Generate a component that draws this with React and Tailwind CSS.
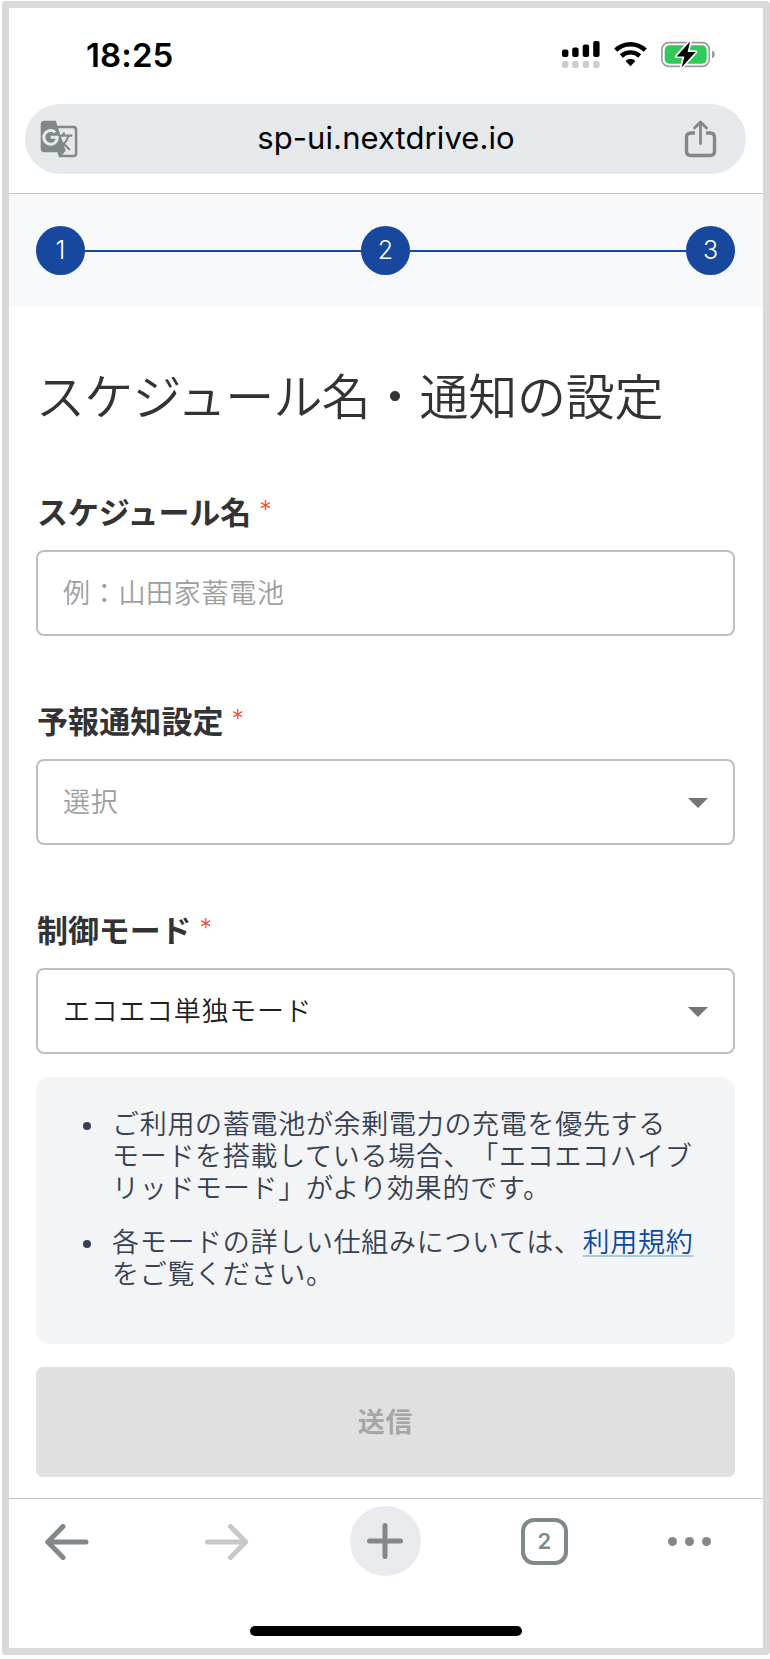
import React from 'react';
import { MdGTranslate } from 'react-icons/md';

const steps = ['1', '2', '3'];

function StatusBar() {
  return (
    <div className="flex h-[95px] items-start justify-between pl-[77px] pr-[47px] pt-[24px] font-['Inter',sans-serif]">
      <span className="pt-[0.5px] text-[33px] font-semibold leading-[44px] tracking-[0.1px] text-black">18:25</span>
      <svg className="mt-[8px]" width="156" height="30" viewBox="560 40 156 30" fill="none">
        <g fill="#000">
          <rect x="562" y="49.5" width="6.4" height="7.5" rx="2" />
          <rect x="572.2" y="47.5" width="6.4" height="9.5" rx="2" />
          <rect x="582.7" y="44.5" width="6.4" height="12.5" rx="2" />
          <rect x="593.2" y="41" width="6.4" height="16" rx="2" />
        </g>
        <g fill="#ccc">
          <rect x="562" y="61" width="6.4" height="7" rx="2.2" />
          <rect x="572.2" y="61" width="6.4" height="7" rx="2.2" />
          <rect x="582.7" y="61" width="6.4" height="7" rx="2.2" />
          <rect x="593.2" y="61" width="6.4" height="7" rx="2.2" />
        </g>
        <path d="M615.7 50.2C624.2 42.2 636.8 42.2 645.3 50.2" stroke="#000" strokeWidth="4.6" />
        <path d="M621.3 56C626.6 51.2 634.4 51.2 639.7 56" stroke="#000" strokeWidth="4.4" />
        <path d="M625.6 61C628.3 58.4 632.7 58.4 635.4 61L630.5 66.2Z" fill="#000" />
        <rect x="661.9" y="42.6" width="47.4" height="23.8" rx="7" stroke="#9b9b9b" strokeWidth="1.6" />
        <path d="M712 50.6C715.8 52 715.8 57 712 58.4Z" fill="#9b9b9b" />
        <rect x="664.7" y="45.3" width="42" height="18.4" rx="4.6" fill="#34c759" />
        <path
          d="M690 41.5L676.6 56.4H684.4L681.6 67.4L695.6 52H687.6Z"
          fill="#000"
          stroke="#fff"
          strokeWidth="3.4"
          strokeLinejoin="round"
          paintOrder="stroke"
        />
      </svg>
    </div>
  );
}

function AddressBar() {
  return (
    <div className="border-b border-[#c4c7ca] pb-[19px] pl-4 pr-[17px] pt-[0.5px]">
      <div className="flex h-[70.5px] items-center justify-between rounded-full bg-[#e5e9ec] pl-[14px] pr-[29px]">
        <MdGTranslate className="h-10 w-10 text-[#80888b]" />
        <span className="ml-[9px] pb-[2px] font-['Inter',sans-serif] text-[31px] tracking-[0.08px] text-black">
          sp-ui.nextdrive.io
        </span>
        <svg width="33" height="38" viewBox="0 0 33 38" fill="none" stroke="#80888b" strokeLinecap="round">
          <path d="M11 13H7Q2.5 13 2.5 17.5V31Q2.5 35.5 7 35.5H26Q30.5 35.5 30.5 31V17.5Q30.5 13 26 13H22" strokeWidth="3.4" strokeLinecap="butt" />
          <path d="M16.5 23.5V2.5M10.5 8L16.5 2L22.5 8" strokeWidth="2.8" strokeLinejoin="round" />
        </svg>
      </div>
    </div>
  );
}

function Stepper() {
  return (
    <div className="flex h-[113px] items-center bg-[#f7f8fa] pl-[27px] pr-[28px]">
      {steps.map((step, i) => (
        <React.Fragment key={step}>
          {i > 0 && <div className="h-[2px] flex-1 bg-[#17489e]" />}
          <div className="flex h-[49px] w-[49px] shrink-0 items-center justify-center rounded-full bg-[#17489e] font-['Inter',sans-serif] text-[25px] font-light leading-none text-white">
            {step}
          </div>
        </React.Fragment>
      ))}
    </div>
  );
}

function Field({ label, children, caret }) {
  return (
    <div>
      <div className="flex h-[52px] items-center pb-[3px] pl-[1px] text-[31px] font-bold text-[#333]">
        {label}
        <span className="ml-[8px] pb-[2px] font-['Inter',sans-serif] text-[25px] font-light text-[#f4502f]">*</span>
      </div>
      <div className="mt-[11px] flex h-[86px] items-center justify-between rounded-lg border-2 border-[#bfbfbf] pl-[25px] pr-[25px]">
        {children}
        {caret && (
          <svg className="mt-[1px]" width="20" height="10" viewBox="0 0 20 10">
            <path d="M0 0H20L10 10Z" fill="#757575" />
          </svg>
        )}
      </div>
    </div>
  );
}

function BrowserToolbar() {
  return (
    <div className="border-t border-[#c4c7ca]">
      <div className="flex h-[85px] items-center justify-between pl-9 pr-[52px]">
        <svg width="44" height="36" viewBox="0 0 44 36" fill="none" stroke="#80888b" strokeWidth="5" strokeLinecap="round" strokeLinejoin="round">
          <path d="M41 18H3M18 2.5L2.8 18L18 33.5" />
        </svg>
        <svg className="ml-[16px]" width="44" height="36" viewBox="0 0 44 36" fill="none" stroke="#c8c8c8" strokeWidth="5" strokeLinecap="round" strokeLinejoin="round">
          <path d="M2.5 18H40.5M25.5 2.5L40.7 18L25.5 33.5" />
        </svg>
        <div className="mb-[2px] flex h-[70px] w-[71px] items-center justify-center rounded-full bg-[#e8eaed]">
          <svg width="36" height="36" viewBox="0 0 36 36" stroke="#80888b" strokeWidth="5" strokeLinecap="round">
            <path d="M18 2.5V33.5M2.5 18H33.5" />
          </svg>
        </div>
        <div className="flex h-[47px] w-[47px] items-center justify-center rounded-[13px] border-4 border-[#80888b] font-['Inter',sans-serif] text-[22px] font-semibold text-[#80888b]">
          2
        </div>
        <div className="flex gap-2">
          <i className="h-[9px] w-[9px] rounded-full bg-[#80888b]" />
          <i className="h-[9px] w-[9px] rounded-full bg-[#80888b]" />
          <i className="h-[9px] w-[9px] rounded-full bg-[#80888b]" />
        </div>
      </div>
      <div className="mx-auto mt-[41.5px] h-[10px] w-[272px] rounded-full bg-black" />
    </div>
  );
}

export default function App() {
  return (
    <div className="h-[1659px] w-[770px] bg-white pl-[2px] pt-[1px]" lang="ja">
      <div className="h-[1654px] w-[768px] overflow-hidden rounded-[4px] border-[7px] border-[#d9d9d9] bg-white font-['Noto_Sans_CJK_JP',sans-serif]">
        <StatusBar />
        <AddressBar />
        <Stepper />

        <main className="pl-[27px] pr-[28px]">
          <h1 className="flex h-[180px] items-center whitespace-nowrap pb-[6px] text-[49px] font-[350] text-[#333]">
            <span className="tracking-[-0.8px]">スケジュール</span>
            <span className="tracking-[-0.2px]">名・通知の設定</span>
          </h1>

          <div className="flex flex-col gap-[60px]">
            <Field label={<span className="tracking-[-0.1px]">スケジュール名</span>}>
              <span className="pb-[2px] text-[27px] font-[350] tracking-[0.7px] text-[#9e9e9e]">例：山田家蓄電池</span>
            </Field>
            <Field label={<span className="tracking-[0.1px]">予報通知設定</span>} caret>
              <span className="pb-[2px] text-[27px] font-[350] tracking-[0.7px] text-[#9e9e9e]">選択</span>
            </Field>
            <Field label={<span className="tracking-[-0.1px]">制御モード</span>} caret>
              <span className="pb-[2px] text-[27px] font-[350] tracking-[0.7px] text-[#1f1f1f]">エコエコ単独モード</span>
            </Field>
          </div>

          <div className="mt-[23px] h-[267px] rounded-[14px] bg-[#f3f4f6] pl-[47px] pt-[30px] text-[27px] font-[350] leading-8 tracking-[0.7px] text-[#374151] [text-spacing-trim:space-all]">
            <ul className="flex flex-col gap-[22px]">
              <li className="flex">
                <i className="mr-[21px] mt-[15px] h-2 w-2 shrink-0 rounded-full bg-[#374151]" />
                <p className="whitespace-nowrap">
                  ご利用の蓄電池が余剰電力の充電を優先する
                  <br />
                  モードを搭載している場合、「エコエコハイブ
                  <br />
                  リッドモード」がより効果的です。
                </p>
              </li>
              <li className="flex">
                <i className="mr-[21px] mt-[15px] h-2 w-2 shrink-0 rounded-full bg-[#374151]" />
                <p className="whitespace-nowrap">
                  各モードの詳しい仕組みについては、
                  <a className="ml-[1px] text-[#0d47a1] underline decoration-[#a9cdd6] decoration-2 underline-offset-[3px]">利用規約</a>
                  <br />
                  をご覧ください。
                </p>
              </li>
            </ul>
          </div>

          <button className="mt-[23px] block h-[110px] w-full rounded-[7px] bg-[#e0e0e0] pb-[2px] text-[27px] font-bold tracking-[0.7px] text-[#a6a6a6]">
            送信
          </button>
        </main>

        <div className="h-[21px]" />
        <BrowserToolbar />
      </div>
    </div>
  );
}
